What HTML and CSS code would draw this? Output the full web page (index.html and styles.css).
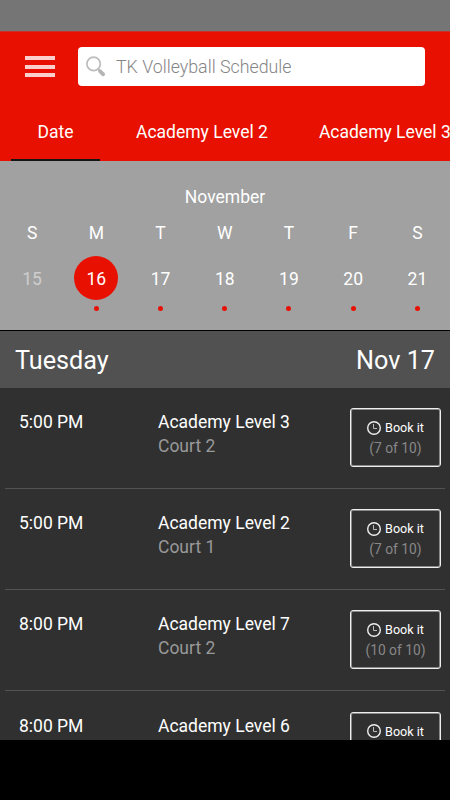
FILE: index.html
```html
<!DOCTYPE html>
<html lang="en">
<head>
  <meta charset="UTF-8" />
  <title>TK Volleyball Schedule</title>
  <meta name="viewport" content="width=device-width, initial-scale=1">
  <link rel="stylesheet" href="styles.css">
</head>
<body>
  <svg class="sprite" width="0" height="0">
    <symbol id="clock" viewBox="0 0 14 14">
      <circle cx="7" cy="7" r="6.3" fill="none" stroke="#eee" stroke-width="1.4" />
      <path d="M6.5 3V7.5H10" fill="none" stroke="#bbb" stroke-width="1" />
    </symbol>
  </svg>

  <div class="status-bar"></div>

  <header>
    <div class="toolbar">
      <div class="menu-icon">
        <span></span>
        <span></span>
        <span></span>
      </div>
      <div class="search">
        <svg class="search-icon" width="20" height="21" viewBox="0 0 20 21">
          <circle cx="7.6" cy="7.9" r="6.7" fill="none" stroke="#bdbdbd" stroke-width="1.7" />
          <path d="M12.2 13l2 2" stroke="#bdbdbd" stroke-width="1.8" />
          <path d="M14 15.2l3.2 3.1" stroke="#b5b5b5" stroke-width="3.8" stroke-linecap="round" />
        </svg>
        <span class="search-text">TK Volleyball Schedule</span>
      </div>
    </div>
    <nav class="tabs">
      <a class="tab active">Date</a>
      <a class="tab">Academy Level 2</a>
      <a class="tab">Academy Level 3</a>
    </nav>
  </header>

  <section class="calendar">
    <div class="month">November</div>
    <div class="week weekdays">
      <span>S</span><span>M</span><span>T</span><span>W</span><span>T</span><span>F</span><span>S</span>
    </div>
    <div class="week dates">
      <div class="day past"><span>15</span></div>
      <div class="day selected"><span>16</span><i></i></div>
      <div class="day"><span>17</span><i></i></div>
      <div class="day"><span>18</span><i></i></div>
      <div class="day"><span>19</span><i></i></div>
      <div class="day"><span>20</span><i></i></div>
      <div class="day"><span>21</span><i></i></div>
    </div>
  </section>

  <main>
    <div class="day-header">
      <span>Tuesday</span>
      <span>Nov 17</span>
    </div>

    <div class="list">
      <div class="row">
        <div class="time">5:00 PM</div>
        <div class="info">
          <div>Academy Level 3</div>
          <div class="court">Court 2</div>
        </div>
        <div class="book">
          <div class="book-label"><svg width="14" height="14"><use href="#clock" /></svg><span>Book it</span></div>
          <div class="spots">(7 of 10)</div>
        </div>
      </div>
      <div class="row">
        <div class="time">5:00 PM</div>
        <div class="info">
          <div>Academy Level 2</div>
          <div class="court">Court 1</div>
        </div>
        <div class="book">
          <div class="book-label"><svg width="14" height="14"><use href="#clock" /></svg><span>Book it</span></div>
          <div class="spots">(7 of 10)</div>
        </div>
      </div>
      <div class="row">
        <div class="time">8:00 PM</div>
        <div class="info">
          <div>Academy Level 7</div>
          <div class="court">Court 2</div>
        </div>
        <div class="book">
          <div class="book-label"><svg width="14" height="14"><use href="#clock" /></svg><span>Book it</span></div>
          <div class="spots">(10 of 10)</div>
        </div>
      </div>
      <div class="row">
        <div class="time">8:00 PM</div>
        <div class="info">
          <div>Academy Level 6</div>
        </div>
        <div class="book">
          <div class="book-label"><svg width="14" height="14"><use href="#clock" /></svg><span>Book it</span></div>
        </div>
      </div>
    </div>
  </main>
</body>
</html>
```

FILE: styles.css
```css
* {
  box-sizing: border-box;
}

body {
  margin: 0;
  height: 800px;
  overflow: hidden;
  background-color: #000;
  color: #fff;
  font-family: Roboto, sans-serif;
  font-size: 17.5px;
  line-height: 24px;
}

.sprite {
  display: block;
}

.status-bar {
  height: 31px;
  background-color: #757575;
}

header {
  height: 130px;
  background-color: #e81000;
  border-top: 1px solid #c8322a;
  overflow: hidden;
}

.toolbar {
  display: flex;
  align-items: center;
  height: 69px;
  padding: 0 25px;
}

.menu-icon {
  display: flex;
  flex-direction: column;
  gap: 4.5px;
  width: 30px;
  margin-right: 23px;
}

.menu-icon span {
  height: 4px;
  background-color: #fccfcc;
}

.search {
  display: flex;
  align-items: center;
  flex: 1;
  height: 39px;
  padding-left: 8px;
  background-color: #fff;
  border-radius: 4px;
  color: #858585;
}

.search-text {
  margin-left: 10px;
  font-size: 17.8px;
  font-weight: 300;
}

.tabs {
  display: flex;
  height: 60px;
  padding-left: 11px;
  white-space: nowrap;
}

.tab {
  flex: none;
  padding: 19px 25.5px 0;
  border-bottom: 2px solid transparent;
}

.tab.active {
  width: 89px;
  margin-right: 10.5px;
  padding: 19px 0 0;
  text-align: center;
  border-color: #151515;
}

.calendar {
  height: 170px;
  padding-top: 24px;
  background-color: #a1a1a1;
  border-bottom: 1px solid #000;
  text-align: center;
}

.week {
  display: grid;
  grid-template-columns: repeat(7, 1fr);
  margin-right: 0.5px;
}

.weekdays {
  margin-top: 12px;
}

.dates {
  margin-top: 11px;
}

.day {
  display: flex;
  flex-direction: column;
  align-items: center;
}

.day span {
  width: 44px;
  height: 44px;
  line-height: 46px;
  border-radius: 50%;
}

.day i {
  width: 5px;
  height: 5px;
  margin-top: 6px;
  border-radius: 50%;
  background-color: #e81000;
}

.day.past {
  color: #cecece;
}

.day.selected span {
  background-color: #e81000;
}

main {
  height: 409px;
  overflow: hidden;
  background-color: #303030;
}

.day-header {
  display: flex;
  justify-content: space-between;
  align-items: center;
  height: 57px;
  padding: 2px 15px 0;
  background-color: #515151;
  font-size: 25.2px;
}

.row {
  display: flex;
  height: 101.1px;
  margin: 0 5px;
  padding: 20.3px 4px 0 14px;
  border-bottom: 1px solid #525252;
}

.time {
  width: 139px;
  padding-top: 2px;
}

.info {
  flex: 1;
  padding-top: 2px;
}

.court {
  color: #999;
}

.book {
  width: 91px;
  height: 59px;
  padding-top: 8px;
  border: 1px solid #eee;
  border-radius: 3px;
  box-shadow: inset 0 0 0 1px #888;
  text-align: center;
  font-size: 12.6px;
  line-height: 21px;
}

.book-label {
  display: flex;
  justify-content: center;
  align-items: center;
  gap: 4px;
}

.spots {
  color: #888;
  font-size: 13.8px;
}
```
